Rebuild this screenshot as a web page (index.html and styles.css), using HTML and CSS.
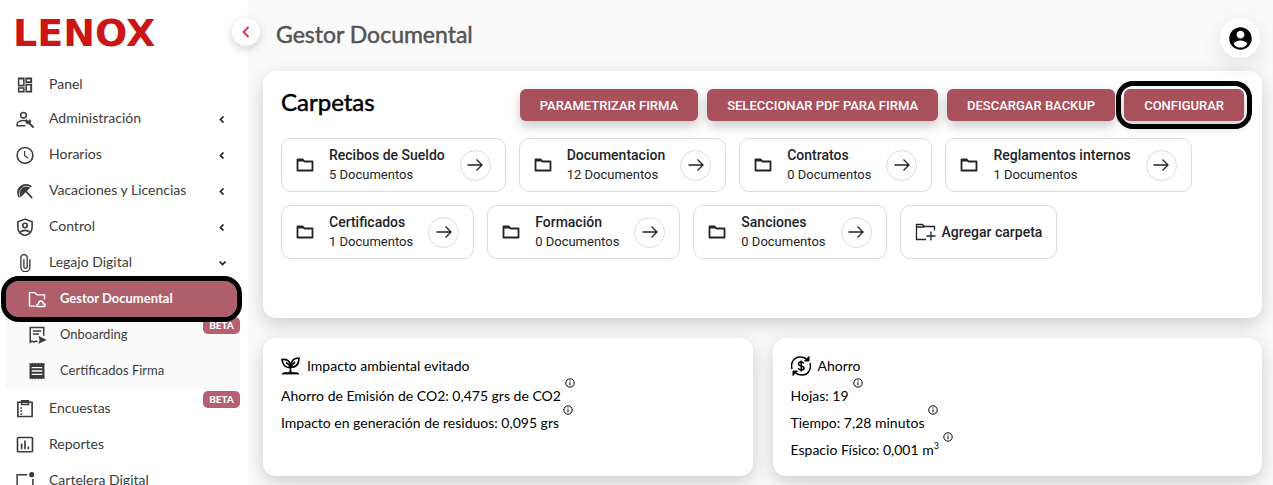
FILE: index.html
```html
<!DOCTYPE html>
<html lang="es">
<head>
<meta charset="utf-8">
<meta name="viewport" content="width=device-width, initial-scale=1">
<title>Gestor Documental</title>
<link rel="stylesheet" href="styles.css">
</head>
<body>
<svg class="defs" aria-hidden="true">
  <symbol id="folder" viewBox="0 0 18 18"><path d="M1.500 14.500V3.500h5.200l1.800 2h8v9h-15z" fill="none" stroke="currentColor" stroke-width="1.800" stroke-linejoin="round"/><path d="M1.500 3h5.300l1.700 2.600h-7z" fill="currentColor"/></symbol>
  <symbol id="arrow" viewBox="0 0 18 18"><path d="M1.500 9h14.500M10.500 3.500L16 9l-5.500 5.500" fill="none" stroke="currentColor" stroke-width="1.300"/></symbol>
  <symbol id="chev" viewBox="0 0 8 8"><path d="M5.500 1.500L2.500 4.500l3 3" fill="none" stroke="currentColor" stroke-width="1.700"/></symbol>
  <symbol id="info" viewBox="0 0 10 10"><circle cx="5" cy="5" r="4.200" fill="none" stroke="currentColor" stroke-width="1"/><path d="M5 4.300v3M5 2.500v1" stroke="currentColor" stroke-width="1"/></symbol>
</svg>
<div class="app">
  <aside class="sidebar">
    <a class="logo" href="#">LENOX</a>
    <button class="collapse" type="button" aria-label="Contraer menú"><svg width="12" height="14" viewBox="0 0 12 14"><path d="M8.500 2L3.500 7l5 5" fill="none" stroke="currentColor" stroke-width="1.800"/></svg></button>
    <nav class="menu">
      <a class="item first" href="#"><svg class="ico" viewBox="0 0 24 24"><path fill="currentColor" d="M19 4.500v2.500h-4.500V4.500H19M9.500 4.500v7H4.500v-7h5m9.500 8v7h-4.500v-7H19M9.500 17v2.500H4.500V17h5M21.500 2h-9v7.500h9V2zM11.500 2h-9v12h9V2zm10 8.500h-9V22h9V10.500zm-10 4.500h-9v7h9v-7z"/></svg><span>Panel</span></a>
      <a class="item" href="#"><svg class="ico" viewBox="0 0 24 24" fill="none" stroke="currentColor" stroke-width="2"><circle cx="10" cy="7" r="3.800"/><path d="M12.500 21H1.500v-2.500c0-3 5-4.500 8.500-4.500 1 0 2 .1 3 .4"/><path d="M17.500 17.500l6 6" stroke-width="2.600"/><path d="M14 12.500l2.500 2.500 2-2.200a3.500 3.500 0 0 1-.2 5.200 3.500 3.500 0 0 1-4.300-5.500z" fill="currentColor" stroke-width="1"/></svg><span>Administración</span><svg class="chev"><use href="#chev"/></svg></a>
      <a class="item" href="#"><svg class="ico" viewBox="0 0 24 24" fill="none" stroke="currentColor" stroke-width="2.100"><circle cx="12" cy="12.500" r="10.500"/><path d="M11.500 6.500V13l5 3.200" stroke-width="1.600"/></svg><span>Horarios</span><svg class="chev"><use href="#chev"/></svg></a>
      <a class="item" href="#"><svg class="ico" viewBox="0 0 24 24" fill="currentColor"><path d="M13 12L21.500 21.500" stroke="currentColor" stroke-width="2.400"/><path d="M4 21C0 15.500 1 9 5.500 5.500 10 1.500 17 1.500 21 5.500L18 8.500 7.500 19z"/><path d="M5 19.500C3.500 15 5 10 8.500 7.500M9.500 6.500C13 5 17 5.500 19.500 7.500" fill="none" stroke="#fff" stroke-width="1"/></svg><span>Vacaciones y Licencias</span><svg class="chev"><use href="#chev"/></svg></a>
      <a class="item" href="#"><svg class="ico" viewBox="0 0 24 24" fill="none" stroke="currentColor" stroke-width="2.100"><path d="M12 1.500L2.500 5v7c0 5.500 4 10 9.500 11.500 5.500-1.500 9.500-6 9.500-11.500V5z"/><circle cx="12" cy="10" r="3"/><path d="M5.500 19c3.500-3.300 9.500-3.300 13 0"/></svg><span>Control</span><svg class="chev"><use href="#chev"/></svg></a>
      <a class="item" href="#" aria-expanded="true"><svg class="ico" viewBox="0 0 24 24" fill="none" stroke="currentColor" stroke-width="1.800"><path d="M18.500 7v10.500a6 6 0 0 1-12 0V5a4.200 4.200 0 0 1 8.400 0v12a2.200 2.200 0 0 1-4.400 0V7"/></svg><span>Legajo Digital</span><svg class="chev down"><use href="#chev"/></svg></a>
      <div class="submenu">
        <a class="item sub active" href="#"><svg class="ico" viewBox="0 0 24 24" fill="none" stroke="currentColor" stroke-width="1.900"><path d="M10 21.500H2V3.500h7l3 3h10v6"/><path d="M12.500 22h9.500c2-1.500.5-4-1.500-3.500-.5-5-6-5-6.500 0-2.500 0-3 2.500-1.500 3.500z"/></svg><span>Gestor Documental</span></a>
        <a class="item sub" href="#"><svg class="ico" viewBox="0 0 24 24" fill="none" stroke="currentColor" stroke-width="2"><path d="M21 13V2H3v13M6.500 6.500h11M6.500 10.500h8M3 15v6.500l2.500-1.500 2.500 1.500 2.500-1.500 2 1"/><path d="M14.500 14l9.500 4.500-9.500 4.500 1.500-4.500z" fill="currentColor" stroke-width="1"/></svg><span>Onboarding</span><span class="badge">BETA</span></a>
        <a class="item sub" href="#"><svg class="ico" viewBox="0 0 24 24"><path d="M2 1l2 1 2-1 2 1 2-1 2 1 2-1 2 1 2-1 2 1 2-1v22l-2-1-2 1-2-1-2 1-2-1-2 1-2-1-2 1-2-1-2 1z" fill="currentColor"/><path d="M5 7.500h14M5 12h14M5 16.500h14" stroke="#fff" stroke-width="1.700"/></svg><span>Certificados Firma</span></a>
      </div>
      <a class="item" href="#"><svg class="ico" viewBox="0 0 24 24" fill="none" stroke="currentColor" stroke-width="2.200"><path d="M2.500 3h19v19h-19zM7.500 1h9v5h-9z"/><path d="M7 9.500v10" stroke-dasharray="2 2"/></svg><span>Encuestas</span><span class="badge">BETA</span></a>
      <a class="item" href="#"><svg class="ico" viewBox="0 0 24 24" fill="none" stroke="currentColor" stroke-width="2.200"><rect x="2" y="2" width="20" height="19" rx="1"/><path d="M7.500 10v7.500M12 6v11.500M16.500 14v3.500"/></svg><span>Reportes</span></a>
      <a class="item" href="#"><svg class="ico" viewBox="0 0 24 24" fill="none" stroke="currentColor" stroke-width="2"><path d="M15 3.500H1.500v15h21V9"/><circle cx="21" cy="3.500" r="3.500" fill="currentColor" stroke="none"/></svg><span>Cartelera Digital</span></a>
    </nav>
  </aside>
  <main class="main">
    <header class="topbar">
      <h1>Gestor Documental</h1>
      <button class="user" type="button" aria-label="Cuenta"><svg width="27" height="27" viewBox="0 0 24 24"><path fill="currentColor" d="M12 2C6.480 2 2 6.480 2 12s4.480 10 10 10 10-4.480 10-10S17.520 2 12 2zm0 3c1.930 0 3.500 1.570 3.500 3.500S13.930 12 12 12s-3.500-1.570-3.500-3.500S10.070 5 12 5zm0 15c-2.500 0-5-1-6-3.200 0-2 4-3.100 6-3.100s6 1.100 6 3.100C17 19 14.500 20 12 20z"/></svg></button>
    </header>
    <section class="card folders">
      <div class="folders-head">
        <h2>Carpetas</h2>
        <div class="actions">
          <button class="btn" type="button">PARAMETRIZAR FIRMA</button>
          <button class="btn" type="button">SELECCIONAR PDF PARA FIRMA</button>
          <button class="btn" type="button">DESCARGAR BACKUP</button>
          <button class="btn ringed" type="button">CONFIGURAR</button>
        </div>
      </div>
      <div class="list">
        <article class="folder"><svg class="fico"><use href="#folder"/></svg><div class="ftext"><h3>Recibos de Sueldo</h3><p>5 Documentos</p></div><button class="go" type="button" aria-label="Abrir Recibos de Sueldo"><svg><use href="#arrow"/></svg></button></article>
        <article class="folder"><svg class="fico"><use href="#folder"/></svg><div class="ftext"><h3>Documentacion</h3><p>12 Documentos</p></div><button class="go" type="button" aria-label="Abrir Documentacion"><svg><use href="#arrow"/></svg></button></article>
        <article class="folder"><svg class="fico"><use href="#folder"/></svg><div class="ftext"><h3>Contratos</h3><p>0 Documentos</p></div><button class="go" type="button" aria-label="Abrir Contratos"><svg><use href="#arrow"/></svg></button></article>
        <article class="folder"><svg class="fico"><use href="#folder"/></svg><div class="ftext"><h3>Reglamentos internos</h3><p>1 Documentos</p></div><button class="go" type="button" aria-label="Abrir Reglamentos internos"><svg><use href="#arrow"/></svg></button></article>
        <article class="folder"><svg class="fico"><use href="#folder"/></svg><div class="ftext"><h3>Certificados</h3><p>1 Documentos</p></div><button class="go" type="button" aria-label="Abrir Certificados"><svg><use href="#arrow"/></svg></button></article>
        <article class="folder"><svg class="fico"><use href="#folder"/></svg><div class="ftext"><h3>Formación</h3><p>0 Documentos</p></div><button class="go" type="button" aria-label="Abrir Formación"><svg><use href="#arrow"/></svg></button></article>
        <article class="folder"><svg class="fico"><use href="#folder"/></svg><div class="ftext"><h3>Sanciones</h3><p>0 Documentos</p></div><button class="go" type="button" aria-label="Abrir Sanciones"><svg><use href="#arrow"/></svg></button></article>
        <button class="folder add" type="button"><svg width="21" height="18" viewBox="0 0 21 18" fill="none" stroke="currentColor" stroke-width="1.300"><path d="M11 16.500H1.500V1.500h6l2 2h10v4M1.500 4h8"/><path d="M16 8.500v9M11.500 13h9"/></svg><span>Agregar carpeta</span></button>
      </div>
    </section>
    <div class="stats">
      <section class="card stat">
        <h4><svg width="19" height="18" viewBox="0 0 19 18" fill="none" stroke="currentColor" stroke-width="1.700"><path d="M9.500 15v-4.500M9.500 10.500C4.500 11 1.500 8 1 2.500c4.500-.5 7.500 1.500 8.500 5M9.500 10.500C9.500 4.500 12.500 1 18 1c0 6-3 9.500-8.500 9.500zM5 5.500c2 1 3.500 2.500 4.500 5M14 5c-2 1.500-3.500 3-4.500 5.500"/><path d="M1 17c1.500-2 4.500-1 8.500-2 4 1 7 0 8.500 2z" fill="currentColor" stroke-width=".8"/></svg><span>Impacto ambiental evitado</span></h4>
        <p>Ahorro de Emisión de CO2: 0,475 grs de CO2<svg class="info"><use href="#info"/></svg></p>
        <p>Impacto en generación de residuos: 0,095 grs<svg class="info"><use href="#info"/></svg></p>
      </section>
      <section class="card stat">
        <h4><svg width="20" height="20" viewBox="0 0 20 20" fill="none" stroke="currentColor" stroke-width="1.500"><path d="M1 13C-.5 8 2 1 9 1c3 0 5.500 1 7 3M19 7c1.500 5-1 12-8 12-3 0-5.500-1-7-3"/><path d="M18 .5V5h-4.500zM2 19.500V15h4.500z" fill="currentColor" stroke-width="1"/><path d="M12.800 7.500C12 5.500 7.500 5.500 7.500 8c0 2.500 5.500 1.500 5.500 4 0 2.500-5 2.500-5.800.3M10.200 4.500v11"/></svg><span>Ahorro</span></h4>
        <p>Hojas: 19<svg class="info"><use href="#info"/></svg></p>
        <p>Tiempo: 7,28 minutos<svg class="info"><use href="#info"/></svg></p>
        <p>Espacio Físico: 0,001 m<sup>3</sup><svg class="info"><use href="#info"/></svg></p>
      </section>
    </div>
  </main>
</div>
</body>
</html>
```
FILE: styles.css
```css
* { box-sizing: border-box; }
body {
  margin: 0;
  background: #fafafa;
  color: #000;
  font-family: Lato, "Liberation Sans", sans-serif;
  font-size: 14px;
  overflow: hidden;
}
h1, h2, h3, h4, p { margin: 0; font-weight: 400; }
button { font-family: inherit; cursor: pointer; }
a { text-decoration: none; color: inherit; }
svg { display: block; flex: none; }
.defs { position: absolute; width: 0; height: 0; }
.app { display: flex; height: 100vh; }

.sidebar {
  position: relative;
  z-index: 1;
  flex: none;
  width: 248px;
  background: #fff;
}
.logo {
  display: flex;
  align-items: center;
  height: 66px;
  padding-left: 13px;
  color: #cb1517;
  font: bold 38px/40px "DejaVu Sans", sans-serif;
}
.collapse {
  position: absolute;
  top: 18px;
  right: -12px;
  display: grid;
  place-items: center;
  width: 28px;
  height: 28px;
  padding: 0;
  border: 0;
  border-radius: 50%;
  background: #fff;
  color: #d9304a;
  box-shadow: 0 3px 10px rgba(0, 0, 0, .18);
}
.menu {
  height: calc(100vh - 66px);
  padding: 3px 8px 0 5px;
  overflow: hidden;
}
.item {
  position: relative;
  display: flex;
  align-items: center;
  gap: 15px;
  height: 36px;
  padding: 0 14px 0 11px;
  color: #3c3c3c;
  font-size: 14px;
  line-height: 20px;
}
.item > span:not(.badge) { padding-bottom: 2px; }
.item.first { height: 32px; }
.ico { width: 18px; height: 18px; }
.chev { width: 8px; height: 8px; margin-left: auto; color: #222; }
.down { transform: rotate(-90deg); }
.submenu { margin-bottom: 2px; background: #fafafa; }
.sub { gap: 14px; padding-left: 23px; font-size: 13px; }
.active {
  z-index: 1;
  margin: 0 3px 0 1px;
  padding-left: 22px;
  background: #af5f6c;
  color: #fff;
  font-weight: 700;
  border-radius: 13px;
  outline: 5px solid #000;
}
.badge {
  position: absolute;
  top: 0;
  right: 0;
  width: 37px;
  border-radius: 5px;
  background: #b5606e;
  color: #fff;
  font-size: 10px;
  font-weight: 900;
  line-height: 17px;
  text-align: center;
}

.main { flex: 1; min-width: 0; padding: 0 11px 0 15px; }
.topbar {
  display: flex;
  align-items: center;
  justify-content: space-between;
  height: 71px;
  padding: 0 2px 0 13px;
}
h1 { padding-bottom: 4px; color: #555; font-size: 23px; -webkit-text-stroke: 0.500px; }
.user {
  display: grid;
  place-items: center;
  width: 40px;
  height: 40px;
  margin-top: 5px;
  padding: 0;
  border: 0;
  border-radius: 50%;
  background: #fff;
  color: #000;
  box-shadow: 0 8px 24px rgba(0, 0, 0, .1);
}
.card {
  border-radius: 13px;
  background: #fff;
  box-shadow: 0 6px 18px rgba(0, 0, 0, .18);
}
.folders { min-height: 247px; padding: 18px; }
.folders-head { display: flex; justify-content: space-between; }
h2 { font-size: 24px; line-height: 26px; -webkit-text-stroke: 0.500px; }
.actions { display: flex; gap: 9px; }
.btn {
  position: relative;
  height: 32px;
  padding: 0 20px;
  border: 0;
  border-radius: 6px;
  background: #a8505c;
  color: #fff;
  font-family: Roboto, sans-serif;
  font-size: 13px;
  font-weight: 500;
  box-shadow: 0 5px 12px rgba(0, 0, 0, .22);
}
.ringed::after {
  content: "";
  position: absolute;
  inset: -8px;
  border: 5px solid #000;
  border-radius: 17px;
}
.list { display: flex; flex-wrap: wrap; gap: 13px; margin-top: 17px; }
.folder {
  display: flex;
  align-items: center;
  height: 54px;
  padding: 0 14px;
  border: 1px solid #dcdcdc;
  border-radius: 10px;
  background: #fff;
  color: #212529;
  font-family: Roboto, sans-serif;
  font-size: 13px;
}
.fico { width: 18px; height: 18px; }
.ftext { margin: 0 15px; line-height: 20px; }
h3, .add { font-size: 14px; font-weight: 500; }
.go {
  display: grid;
  place-items: center;
  width: 31px;
  height: 31px;
  padding: 0;
  border: 1px solid #dcdcdc;
  border-radius: 50%;
  background: #fff;
  color: #212529;
}
.go svg { width: 18px; height: 18px; }
.add { gap: 6px; }
.stats {
  display: grid;
  grid-template-columns: 1fr 1fr;
  gap: 20px;
  margin-top: 20px;
}
.stat { min-height: 138px; padding: 18px 18px 12px; line-height: 26px; }
h4 { display: flex; align-items: center; gap: 7px; height: 20px; margin-bottom: 7px; font-size: 14px; }
.stat p { display: flex; align-items: flex-start; height: 27px; }
.info { width: 10px; height: 10px; margin: -5px 0 0 4px; }
sup { font-size: 9px; line-height: 18px; }
```
